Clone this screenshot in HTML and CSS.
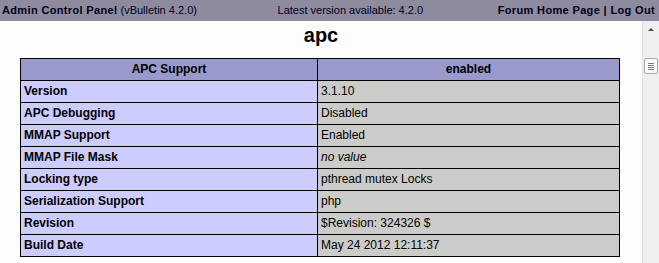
FILE: index.html
```html
<!DOCTYPE html>
<html lang="en">
<head>
    <meta charset="UTF-8">
    <title>Admin Control Panel - apc</title>
    <link rel="stylesheet" href="styles.css">
</head>
<body>
    <div class="topbar">
        <div class="tb-left"><b>Admin Control Panel</b> (vBulletin 4.2.0)</div>
        <div class="tb-mid">Latest version available: 4.2.0</div>
        <div class="tb-right"><b>Forum Home Page | Log Out</b></div>
    </div>

    <div class="frame">
        <div class="content">
            <h2>apc</h2>
            <table class="info">
                <tr class="h"><th>APC Support</th><th>enabled</th></tr>
                <tr><td class="e">Version</td><td class="v">3.1.10</td></tr>
                <tr><td class="e">APC Debugging</td><td class="v">Disabled</td></tr>
                <tr><td class="e">MMAP Support</td><td class="v">Enabled</td></tr>
                <tr><td class="e">MMAP File Mask</td><td class="v"><i>no value</i></td></tr>
                <tr><td class="e">Locking type</td><td class="v">pthread mutex Locks</td></tr>
                <tr><td class="e">Serialization Support</td><td class="v">php</td></tr>
                <tr><td class="e">Revision</td><td class="v">$Revision: 324326 $</td></tr>
                <tr><td class="e">Build Date</td><td class="v">May 24 2012 12:11:37</td></tr>
            </table>
        </div>
        <!-- scrollbar of the lower frame -->
        <div class="scrollbar">
            <div class="sb-arrow"></div>
            <div class="sb-thumb"><span></span><span></span><span></span><span></span></div>
        </div>
    </div>
</body>
</html>
```

FILE: styles.css
```css
html, body {
    margin: 0;
    padding: 0;
    height: 100%;
    overflow: hidden;
}
body {
    font-family: 'Liberation Sans', Arial, sans-serif;
    background: #fcfdfc;
    color: #000;
}
.topbar {
    height: 21px;
    background: #8e8b9f;
    color: #00001a;
    font-size: 11px;
    line-height: 20px;
    display: grid;
    grid-template-columns: auto 1fr auto;
    padding: 0 4px 0 2px;
}
.topbar b {
    letter-spacing: 0.35px;
}
.tb-mid {
    text-align: center;
    padding-left: 6px;
}
.frame {
    display: flex;
    height: calc(100% - 21px);
}
.content {
    flex: 1;
}
h2 {
    margin: 0;
    font-size: 20px;
    line-height: 23px;
    padding-top: 3px;
    text-align: center;
}
.info {
    border-collapse: collapse;
    width: 600px;
    margin: 11px 0 0 20px;
    font-size: 12px;
}
.info th, .info td {
    border: 1px solid #000;
    padding: 3px 3px;
    line-height: 15px;
    text-align: left;
}
.info th {
    background: #9999cc;
    text-align: center;
}
.info td.e {
    width: 290px;
    background: #ccccff;
    font-weight: bold;
}
.info td.v {
    background: #cbccc9;
}
.scrollbar {
    width: 16px;
    border-left: 1px solid #e2e2e2;
    background: #efefef;
}
.sb-arrow {
    margin: 7px auto 0;
    width: 0;
    height: 0;
    border-left: 3px solid transparent;
    border-right: 3px solid transparent;
    border-bottom: 3px solid #4a4a4a;
}
.sb-thumb {
    box-sizing: border-box;
    margin: 27px 0 0 1px;
    width: 14px;
    height: 16px;
    border: 1px solid #a9a9a9;
    border-radius: 2px;
    background: #f8f8f8;
    display: flex;
    flex-direction: column;
    justify-content: center;
    gap: 1px;
}
.sb-thumb span {
    height: 1px;
    background: #7a7a7a;
    margin: 0 3px;
}
```
